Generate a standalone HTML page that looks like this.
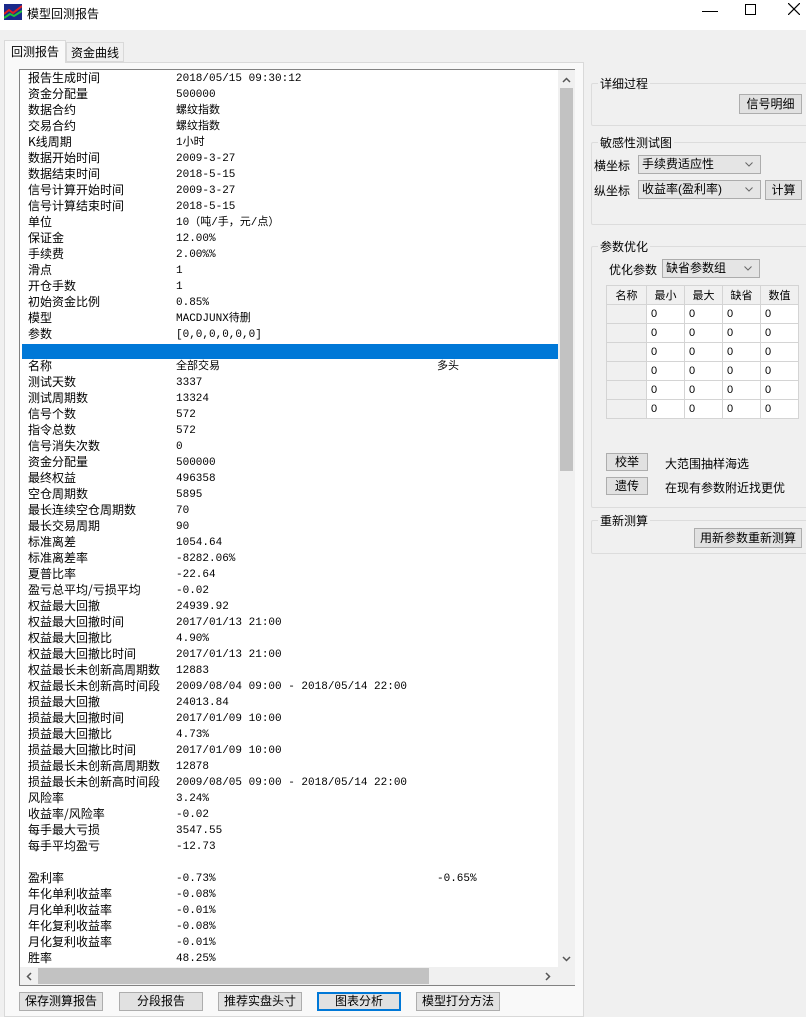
<!DOCTYPE html>
<html><head><meta charset="utf-8"><style>
*{margin:0;padding:0;box-sizing:border-box}
body{width:806px;height:1017px;background:#f0f0f0;font-family:"Liberation Sans","Noto Sans CJK SC",sans-serif;font-size:12px;color:#000;position:relative;overflow:hidden}
.abs{position:absolute}
.title{left:0;top:0;width:806px;height:30px;background:#fff}
.pane{left:4px;top:62px;width:580px;height:955px;background:#f9f9f9;border:1px solid #d9d9d9}
.list{left:19px;top:69px;width:556px;height:917px;background:#fff;border:1px solid #828282}
.row{position:absolute;left:8px;height:16px;line-height:16px;white-space:nowrap;font-family:"Liberation Mono","Noto Sans CJK SC",monospace;font-size:11px}
.row span{position:absolute;top:0;line-height:16px;height:16px}
.row span.cjk{font-family:"Noto Sans CJK SC",sans-serif;font-size:12px;top:-1px}
.btn{position:absolute;background:#e1e1e1;border:1px solid #adadad;text-align:center;font-size:12px;line-height:16px}
.grp{position:absolute;border:1px solid #dcdcdc;border-radius:2px}
.grp .lb{position:absolute;left:6px;top:-9px;background:#f0f0f0;padding:0 2px;font-size:12px}
.sel{position:absolute;background:#e5e5e5;border:1px solid #acacac;font-size:12px;line-height:17px;padding-left:3px}
.sel svg{position:absolute;right:7px;top:6px}
table{border-collapse:collapse;position:absolute;left:606px;top:285px}
td{border:1px solid #d4d4d4;width:38px;height:19px;font-size:11px;padding-left:4px;background:#fff}
td.h{background:#f0f0f0;text-align:center;padding:0}
td.g{background:#f0f0f0;width:40px}
</style></head><body>
<div class="abs title">
<svg class="abs" style="left:4px;top:4px" width="18" height="16"><rect width="18" height="16" fill="#1a2a8a"/><path d="M0 10 L5 6 L9 9 L18 2" stroke="#e02020" stroke-width="2" fill="none"/><path d="M0 14 L6 10 L10 12 L18 7" stroke="#20c040" stroke-width="2" fill="none"/></svg>
<div class="abs" style="left:27px;top:5px;font-size:12px">模型回测报告</div>
<div class="abs" style="left:702px;top:11px;width:16px;height:1px;background:#000"></div>
<div class="abs" style="left:745px;top:4px;width:11px;height:11px;border:1px solid #000"></div>
<svg class="abs" style="left:788px;top:3px" width="12" height="12"><path d="M0 0L12 12M12 0L0 12" stroke="#000" stroke-width="1.2"/></svg>
</div>
<div class="abs" style="left:4px;top:40px;width:62px;height:23px;background:#f9f9f9;border:1px solid #d9d9d9;border-bottom:none;text-align:center;line-height:22px;z-index:2">回测报告</div>
<div class="abs" style="left:66px;top:42px;width:58px;height:20px;background:#f0f0f0;border:1px solid #d9d9d9;text-align:center;line-height:20px">资金曲线</div>
<div class="abs pane"></div>
<div class="abs list">
<div class="abs" style="left:2px;top:274px;width:536px;height:15px;background:#0078d7"></div>
<div id="rows"></div>
<div class="abs" style="left:538px;top:0;width:17px;height:897px;background:#f0f0f0"></div>
<div class="abs" style="left:540px;top:18px;width:13px;height:383px;background:#c2c2c2"></div>
<svg class="abs" style="left:542px;top:7px" width="9" height="6"><path d="M1 5L4.5 1.5L8 5" stroke="#555" stroke-width="1.5" fill="none"/></svg>
<svg class="abs" style="left:542px;top:886px" width="9" height="6"><path d="M1 1L4.5 4.5L8 1" stroke="#555" stroke-width="1.5" fill="none"/></svg>
<div class="abs" style="left:0;top:897px;width:555px;height:18px;background:#f0f0f0"></div>
<div class="abs" style="left:18px;top:898px;width:391px;height:16px;background:#c2c2c2"></div>
<svg class="abs" style="left:6px;top:902px" width="6" height="9"><path d="M5 1L1.5 4.5L5 8" stroke="#555" stroke-width="1.5" fill="none"/></svg>
<svg class="abs" style="left:525px;top:902px" width="6" height="9"><path d="M1 1L4.5 4.5L1 8" stroke="#555" stroke-width="1.5" fill="none"/></svg>
</div>
<script>
var d=[["报告生成时间","2018/05/15 09:30:12"],["资金分配量","500000"],["数据合约","螺纹指数"],["交易合约","螺纹指数"],["K线周期","1小时"],["数据开始时间","2009-3-27"],["数据结束时间","2018-5-15"],["信号计算开始时间","2009-3-27"],["信号计算结束时间","2018-5-15"],["单位","10（吨/手，元/点）"],["保证金","12.00%"],["手续费","2.00%%"],["滑点","1"],["开仓手数","1"],["初始资金比例","0.85%"],["模型","MACDJUNX待删"],["参数","[0,0,0,0,0,0]"],["",""],["名称","全部交易","多头"],["测试天数","3337"],["测试周期数","13324"],["信号个数","572"],["指令总数","572"],["信号消失次数","0"],["资金分配量","500000"],["最终权益","496358"],["空仓周期数","5895"],["最长连续空仓周期数","70"],["最长交易周期","90"],["标准离差","1054.64"],["标准离差率","-8282.06%"],["夏普比率","-22.64"],["盈亏总平均/亏损平均","-0.02"],["权益最大回撤","24939.92"],["权益最大回撤时间","2017/01/13 21:00"],["权益最大回撤比","4.90%"],["权益最大回撤比时间","2017/01/13 21:00"],["权益最长未创新高周期数","12883"],["权益最长未创新高时间段","2009/08/04 09:00 - 2018/05/14 22:00"],["损益最大回撤","24013.84"],["损益最大回撤时间","2017/01/09 10:00"],["损益最大回撤比","4.73%"],["损益最大回撤比时间","2017/01/09 10:00"],["损益最长未创新高周期数","12878"],["损益最长未创新高时间段","2009/08/05 09:00 - 2018/05/14 22:00"],["风险率","3.24%"],["收益率/风险率","-0.02"],["每手最大亏损","3547.55"],["每手平均盈亏","-12.73"],["",""],["盈利率","-0.73%","-0.65%"],["年化单利收益率","-0.08%"],["月化单利收益率","-0.01%"],["年化复利收益率","-0.08%"],["月化复利收益率","-0.01%"],["胜率","48.25%"]];
var h="";d.forEach(function(r,i){h+='<div class="row" style="top:'+(1+i*16)+'px"><span class="cjk" style="left:0">'+r[0]+'</span><span style="left:148px">'+r[1]+'</span>'+(r[2]?'<span style="left:409px">'+r[2]+'</span>':'')+'</div>';});
document.getElementById("rows").innerHTML=h;
</script>
<div class="btn" style="left:19px;top:992px;width:84px;height:19px">保存测算报告</div>
<div class="btn" style="left:119px;top:992px;width:84px;height:19px">分段报告</div>
<div class="btn" style="left:218px;top:992px;width:84px;height:19px">推荐实盘头寸</div>
<div class="btn" style="left:317px;top:992px;width:84px;height:19px;border:2px solid #0078d7;line-height:15px">图表分析</div>
<div class="btn" style="left:416px;top:992px;width:84px;height:19px">模型打分方法</div>

<div class="grp" style="left:591px;top:83px;width:220px;height:43px"><span class="lb">详细过程</span></div>
<div class="btn" style="left:739px;top:94px;width:63px;height:20px;line-height:18px">信号明细</div>
<div class="grp" style="left:591px;top:142px;width:220px;height:83px"><span class="lb">敏感性测试图</span></div>
<div class="abs" style="left:594px;top:157px">横坐标</div>
<div class="sel" style="left:638px;top:155px;width:123px;height:19px">手续费适应性<svg width="8" height="5"><path d="M0.5 0.5L4 4L7.5 0.5" stroke="#666" fill="none"/></svg></div>
<div class="abs" style="left:594px;top:182px">纵坐标</div>
<div class="sel" style="left:638px;top:180px;width:123px;height:19px">收益率(盈利率)<svg width="8" height="5"><path d="M0.5 0.5L4 4L7.5 0.5" stroke="#666" fill="none"/></svg></div>
<div class="btn" style="left:765px;top:180px;width:37px;height:20px;line-height:18px">计算</div>
<div class="grp" style="left:591px;top:246px;width:220px;height:262px"><span class="lb">参数优化</span></div>
<div class="abs" style="left:609px;top:261px">优化参数</div>
<div class="sel" style="left:662px;top:259px;width:98px;height:19px">缺省参数组<svg width="8" height="5"><path d="M0.5 0.5L4 4L7.5 0.5" stroke="#666" fill="none"/></svg></div>
<table>
<tr><td class="h">名称</td><td class="h">最小</td><td class="h">最大</td><td class="h">缺省</td><td class="h">数值</td></tr>
<tr><td class="g"></td><td>0</td><td>0</td><td>0</td><td>0</td></tr>
<tr><td class="g"></td><td>0</td><td>0</td><td>0</td><td>0</td></tr>
<tr><td class="g"></td><td>0</td><td>0</td><td>0</td><td>0</td></tr>
<tr><td class="g"></td><td>0</td><td>0</td><td>0</td><td>0</td></tr>
<tr><td class="g"></td><td>0</td><td>0</td><td>0</td><td>0</td></tr>
<tr><td class="g"></td><td>0</td><td>0</td><td>0</td><td>0</td></tr>
</table>
<div class="btn" style="left:606px;top:453px;width:42px;height:18px">校举</div>
<div class="abs" style="left:665px;top:455px">大范围抽样海选</div>
<div class="btn" style="left:606px;top:477px;width:42px;height:18px">遗传</div>
<div class="abs" style="left:665px;top:479px">在现有参数附近找更优</div>
<div class="grp" style="left:591px;top:520px;width:220px;height:34px"><span class="lb">重新测算</span></div>
<div class="btn" style="left:694px;top:528px;width:108px;height:20px;line-height:18px">用新参数重新测算</div>
</body></html>
